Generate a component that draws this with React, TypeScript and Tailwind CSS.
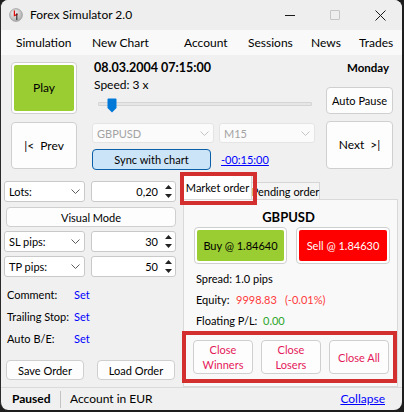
import React from "react";

function Chevron({ color }: { color: string }) {
  return (
    <svg width="9" height="5" viewBox="0 0 9 5" className="shrink-0">
      <path d="M0.5 0.5 L4.5 4.5 L8.5 0.5" fill="none" stroke={color} strokeWidth="1" />
    </svg>
  );
}

function Combo({ label, className, disabled }: { label: string; className: string; disabled?: boolean }) {
  return (
    <div
      className={`flex items-center justify-between rounded-[3px] border px-[4px] ${
        disabled ? "bg-[#fbfbfb] border-[#e4e4e4] text-[#a3a3a3]" : "bg-white border-[#c9c9c9] text-black"
      } ${className}`}
    >
      <span className="leading-none">{label}</span>
      <Chevron color={disabled ? "#c4c4c4" : "#5c5c5c"} />
    </div>
  );
}

function Spinner({ value }: { value: string }) {
  return (
    <div className="ml-[6px] w-[85px] h-[21px] bg-white border border-[#c9c9c9] rounded-[3px] flex items-center">
      <span className="flex-1 text-right pr-[4px] leading-none">{value}</span>
      <div className="w-[12px] mr-[1px] flex flex-col items-center gap-[5px]">
        <svg width="7" height="4" viewBox="0 0 7 4">
          <path d="M0 4 L3.5 0 L7 4Z" fill="#222" />
        </svg>
        <svg width="7" height="4" viewBox="0 0 7 4">
          <path d="M0 0 L3.5 4 L7 0Z" fill="#222" />
        </svg>
      </div>
    </div>
  );
}

function Btn({ children, className }: { children: React.ReactNode; className: string }) {
  return (
    <div
      className={`flex items-center justify-center bg-[#fdfdfd] border border-[#cfcfcf] rounded-[4px] leading-none ${className}`}
    >
      {children}
    </div>
  );
}

function FillBtn({
  children,
  className,
  fill,
}: {
  children: React.ReactNode;
  className: string;
  fill: string;
}) {
  return (
    <div className={`bg-white border border-[#cfcfcf] rounded-[4px] p-[2px] ${className}`}>
      <div className={`w-full h-full rounded-[2px] flex items-center justify-center leading-none ${fill}`}>
        {children}
      </div>
    </div>
  );
}

function AppIcon() {
  return (
    <svg width="14" height="14" viewBox="0 0 14 14">
      <defs>
        <radialGradient id="ig" cx="0.4" cy="0.35" r="0.7">
          <stop offset="0" stopColor="#f2f2f2" />
          <stop offset="1" stopColor="#a9a9a9" />
        </radialGradient>
      </defs>
      <circle cx="7" cy="7" r="6.4" fill="url(#ig)" stroke="#8c8c8c" strokeWidth="0.6" />
      <path d="M5.4 2.6 V7.6 L8.6 6.4" fill="none" stroke="#e01010" strokeWidth="1.3" />
      <path d="M7.8 5.2 V12" fill="none" stroke="#2b2b2b" strokeWidth="1.1" />
    </svg>
  );
}

function TitleBar() {
  return (
    <div className="h-[30px] shrink-0 flex items-center bg-[#eeeeee]">
      <div className="ml-[8px] w-[14px] h-[14px] flex">
        <AppIcon />
      </div>
      <span className="ml-[7px] text-[12px] leading-none">Forex Simulator 2.0</span>
      <div className="ml-auto flex items-center mr-[16px]">
        <div className="w-[10px] h-[1px] bg-[#1a1a1a]" />
        <div className="ml-[35px] w-[10px] h-[10px] border border-[#c6c6c6] rounded-[1px]" />
        <svg className="ml-[35px]" width="11" height="11" viewBox="0 0 11 11">
          <path d="M0.5 0.5 L10.5 10.5 M10.5 0.5 L0.5 10.5" stroke="#1a1a1a" strokeWidth="1" />
        </svg>
      </div>
    </div>
  );
}

function MenuBar() {
  return (
    <div className="h-[25px] shrink-0 flex items-center bg-[#f9f9f9] text-[12px] leading-none pl-[15px]">
      <span className="w-[76px]">Simulation</span>
      <span className="w-[92px]">New Chart</span>
      <span className="w-[64px]">Account</span>
      <span className="w-[63px]">Sessions</span>
      <span className="w-[48px]">News</span>
      <span>Trades</span>
    </div>
  );
}

function TopSection() {
  return (
    <div className="h-[116px] shrink-0 flex text-[11px]">
      <div className="ml-[10px] w-[66px] flex flex-col pt-[7px]">
        <FillBtn className="h-[52px]" fill="bg-[#9acd32] text-black">
          <span className="text-[12px]">Play</span>
        </FillBtn>
        <Btn className="mt-[8px] h-[47px] text-[12px]">
          <span className="whitespace-pre">|&lt;  Prev</span>
        </Btn>
      </div>
      <div className="ml-[15px] w-[301px] flex flex-col">
        <div className="mt-[5px] h-[16px] flex items-center justify-between">
          <span className="pl-[2px] font-bold text-[12.5px] leading-none">08.03.2004 07:15:00</span>
          <span className="pr-[4px] font-bold text-[11.5px] leading-none">Monday</span>
        </div>
        <div className="flex">
          <div className="w-[223px] flex flex-col">
            <div className="mt-[2px] h-[14px] flex items-center pl-[2px] text-[12px] leading-none">Speed: 3 x</div>
            <div className="mt-[4px] h-[16px] relative">
              <div className="ml-[6px] mt-[6px] w-[214px] h-[4px] bg-[#e6e6e6] border border-[#d4d4d4] rounded-[1px]" />
              <svg
                className="absolute left-[15px] top-[2px]"
                width="10"
                height="15"
                viewBox="0 0 10 15"
              >
                <path d="M0.5 1.5 Q0.5 0.5 1.5 0.5 H8.5 Q9.5 0.5 9.5 1.5 V10 L5 14.5 L0.5 10 Z" fill="#0078d7" />
              </svg>
            </div>
            <div className="mt-[11px] flex">
              <Combo label="GBPUSD" className="w-[122px] h-[20px]" disabled />
              <Combo label="M15" className="ml-[5px] w-[96px] h-[20px]" disabled />
            </div>
            <div className="mt-[6px] flex items-center">
              <div className="w-[119px] h-[21px] bg-[#cce4f7] border border-[#0a5fa8] rounded-[4px] flex items-center justify-center leading-none">
                Sync with chart
              </div>
              <span className="ml-[10px] text-[#0000ff] underline leading-none">-00:15:00</span>
            </div>
          </div>
          <div className="ml-[11px] w-[67px] flex flex-col">
            <Btn className="mt-[11px] h-[27px] text-[11px]">Auto Pause</Btn>
            <Btn className="mt-[7px] h-[48px] text-[12px]">
              <span className="whitespace-pre">Next  &gt;|</span>
            </Btn>
          </div>
        </div>
      </div>
    </div>
  );
}

function LeftPanel() {
  return (
    <div className="w-[179px] shrink-0 flex flex-col text-[11px]">
      <div className="mt-[10px] flex pl-[3px]">
        <Combo label="Lots:" className="w-[81px] h-[21px]" />
        <Spinner value="0,20" />
      </div>
      <Btn className="mt-[5px] ml-[5px] w-[170px] h-[20px]">Visual Mode</Btn>
      <div className="mt-[4px] flex pl-[3px]">
        <Combo label="SL pips:" className="w-[81px] h-[21px]" />
        <Spinner value="30" />
      </div>
      <div className="mt-[4px] flex pl-[3px]">
        <Combo label="TP pips:" className="w-[81px] h-[21px]" />
        <Spinner value="50" />
      </div>
      <div className="mt-[6px] flex flex-col pl-[6px]">
        {["Comment:", "Trailing Stop:", "Auto B/E:"].map((l) => (
          <div key={l} className="h-[22px] flex items-center leading-none">
            <span className="w-[67px]">{l}</span>
            <span className="text-[#0000ff]">Set</span>
          </div>
        ))}
      </div>
      <div className="mt-[11px] flex pl-[5px]">
        <Btn className="w-[78px] h-[20px]">Save Order</Btn>
        <Btn className="ml-[13px] w-[78px] h-[20px]">Load Order</Btn>
      </div>
    </div>
  );
}

function RightPanel() {
  return (
    <div className="flex flex-col text-[11px]">
      <div className="h-[28px] flex items-end pl-[3px]">
        <div className="relative w-[69px] h-[24px] bg-white border border-b-0 border-[#d6d6d6] flex items-center justify-center pb-[1px] text-[11px] leading-none">
          Market order
          <div className="absolute -left-[4px] -right-[6px] -top-[4px] -bottom-[6px] border-[4px] border-[#d32f2f]" />
        </div>
        <div className="w-[68px] h-[17px] bg-[#f4f4f4] border border-b-0 border-l-0 border-[#d6d6d6] flex items-center justify-center text-[11px] leading-none whitespace-nowrap">
          Pending order
        </div>
      </div>
      <div className="ml-[3px] w-[215px] h-[188px] bg-[#f9f9f9] border border-[#d9d9d9] flex flex-col">
        <div className="mt-[9px] h-[16px] flex items-center justify-center font-bold text-[13px] leading-none pr-[4px]">
          GBPUSD
        </div>
        <div className="mt-[2px] flex">
          <FillBtn className="ml-[10px] w-[93px] h-[37px]" fill="bg-[#9acd32] text-black">
            Buy @ 1.84640
          </FillBtn>
          <FillBtn className="ml-[9px] w-[94px] h-[37px]" fill="bg-[#ff0000] text-white">
            Sell @ 1.84630
          </FillBtn>
        </div>
        <div className="mt-[4px] h-[21px] flex items-center pl-[12px] leading-none">Spread: 1.0 pips</div>
        <div className="h-[21px] flex items-center pl-[12px] leading-none">
          <span className="w-[40px]">Equity:</span>
          <span className="text-[#ff3a3a]">9998.83</span>
          <span className="ml-[8px] text-[#ff3a3a]">(-0.01%)</span>
        </div>
        <div className="h-[21px] flex items-center pl-[12px] leading-none">
          <span className="w-[67px]">Floating P/L:</span>
          <span className="text-[#2aa52a]">0.00</span>
        </div>
        <div className="-ml-[2px] w-[215px] h-[52px] border-[4px] border-[#d32f2f] flex pl-[7px] pt-[5px]">
          {[["Close", "Winners"], ["Close", "Losers"], ["Close All"]].map((t, i) => (
            <Btn key={i} className={`w-[60px] h-[34px] text-[#e5195a] flex-col ${i > 0 ? "ml-[8px]" : ""}`}>
              {t.map((s) => (
                <span key={s} className="leading-[15px]">
                  {s}
                </span>
              ))}
            </Btn>
          ))}
        </div>
      </div>
    </div>
  );
}

function StatusBar() {
  return (
    <div className="h-[23px] shrink-0 flex items-center border-t border-[#dadada] text-[12px] leading-none">
      <span className="ml-[11px] w-[48px] font-bold">Paused</span>
      <div className="w-[1px] h-[17px] bg-[#c4c4c4]" />
      <span className="ml-[9px]">Account in EUR</span>
      <span className="ml-auto mr-[17px] text-[#0000ff] underline">Collapse</span>
    </div>
  );
}

export default function App() {
  return (
    <div className="w-[404px] h-[412px] bg-[#1e1e1e] font-['Lato',sans-serif] text-black">
      <div className="w-[402px] h-[410px] rounded-[8px] overflow-hidden bg-[#f0f0f0] border-l border-[#2a2a2a] flex flex-col">
        <TitleBar />
        <MenuBar />
        <TopSection />
        <div className="h-[216px] shrink-0 flex">
          <LeftPanel />
          <RightPanel />
        </div>
        <StatusBar />
      </div>
    </div>
  );
}
